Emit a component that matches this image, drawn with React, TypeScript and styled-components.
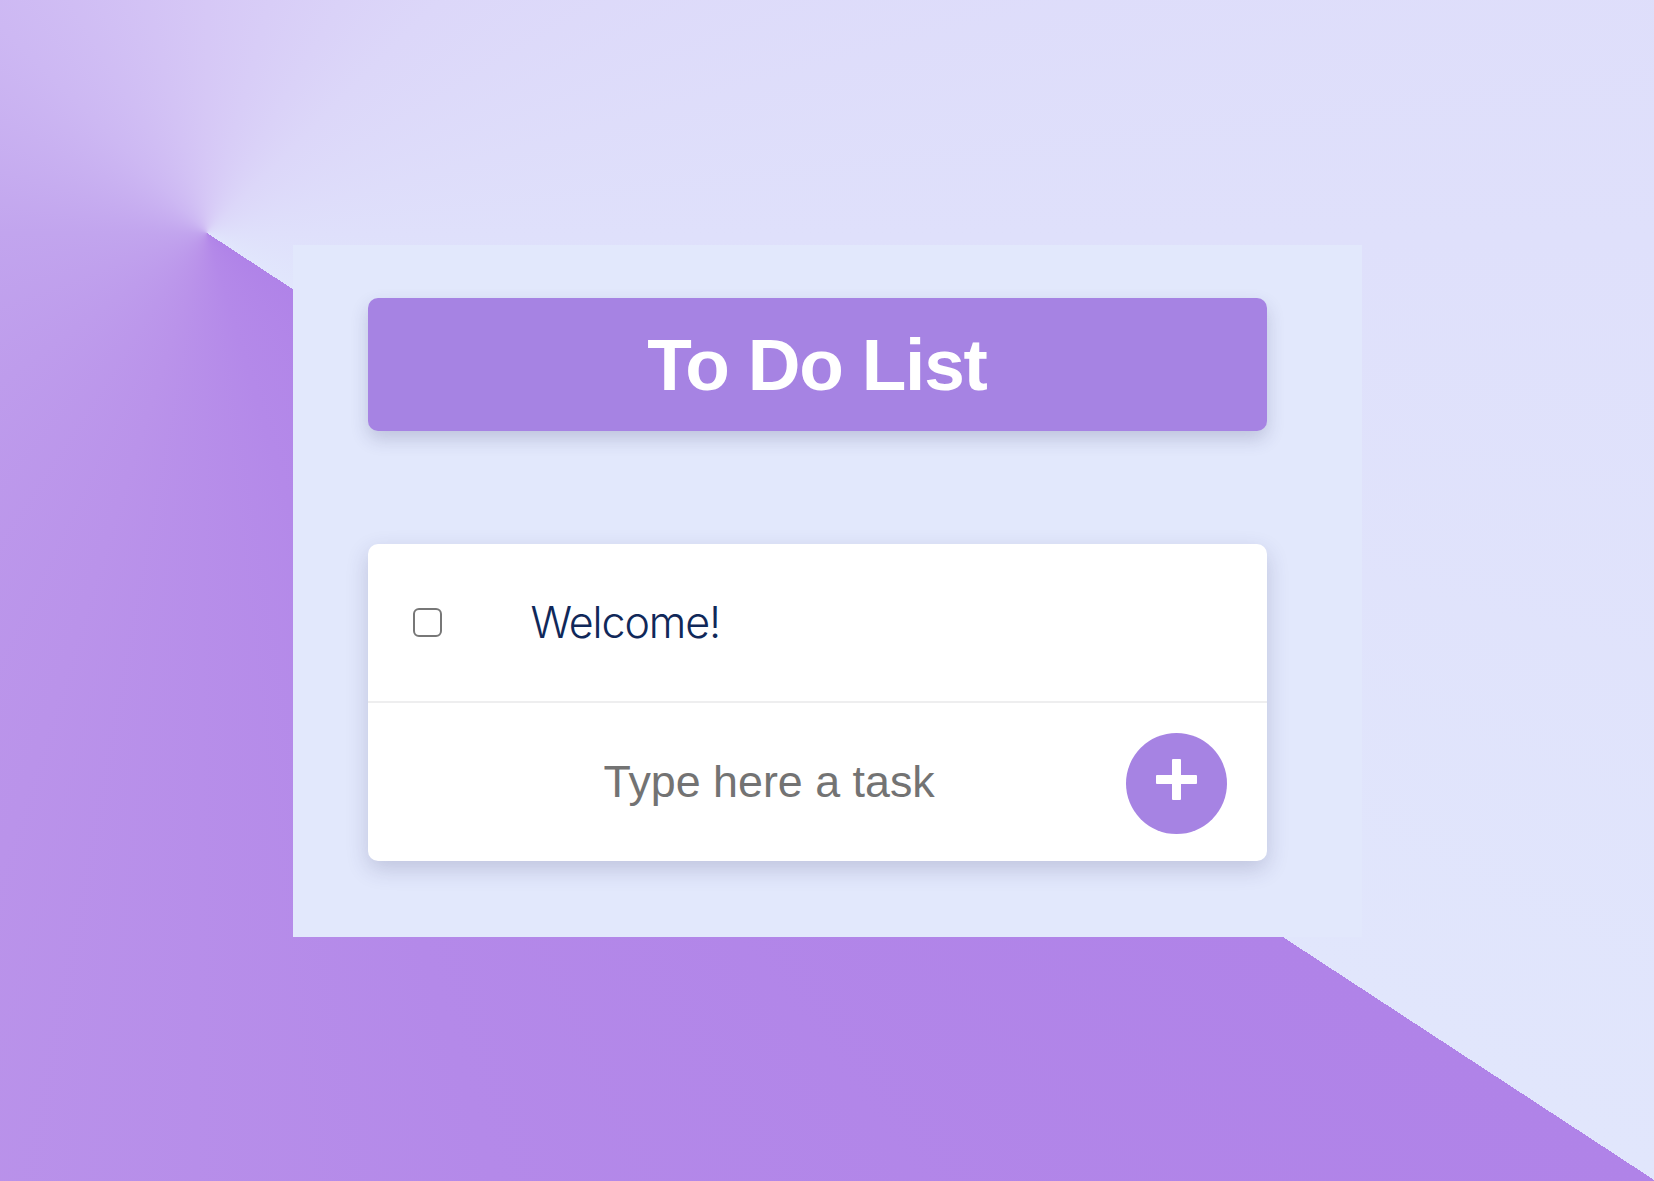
import React from "react";
import styled, { createGlobalStyle } from "styled-components";

const GlobalStyle = createGlobalStyle`
  html, body {
    margin: 0;
    padding: 0;
  }
  body {
    font-family: "Liberation Sans", Arial, sans-serif;
  }
  * { box-sizing: border-box; }
`;

const Page = styled.main`
  min-height: 100vh;
  width: 100%;
  display: flex;
  align-items: center;
  justify-content: center;
  background: conic-gradient(
    from 123.2deg at 207px 233px,
    #b083e8 0deg,
    #b489e9 40deg,
    #ba93ea 75deg,
    #c2a5ee 147deg,
    #cdb8f3 192deg,
    #d6c8f6 237deg,
    #dcd7f9 282deg,
    #dfe0fb 327deg,
    #e1e6fc 360deg
  );
`;

const Panel = styled.section`
  width: 1069px;
  height: 692px;
  background: #e2e8fc;
  display: flex;
  flex-direction: column;
  padding: 53px 95px 0 75px;
  gap: 113px;
`;

const Header = styled.header`
  height: 133px;
  background: #a683e3;
  border-radius: 10px;
  box-shadow: 0 8px 18px rgba(50, 50, 100, 0.2);
  display: flex;
  align-items: center;
  justify-content: center;
`;

const Title = styled.h1`
  margin: 0;
  color: #ffffff;
  font-family: "Liberation Sans", Arial, sans-serif;
  font-weight: 700;
  font-size: 73px;
  letter-spacing: -1.2px;
  line-height: 1;
`;

const Card = styled.div`
  background: #ffffff;
  border-radius: 10px;
  box-shadow: 0 8px 22px rgba(50, 50, 100, 0.2);
  display: flex;
  flex-direction: column;
  overflow: hidden;
`;

const TaskRow = styled.div`
  height: 159px;
  display: flex;
  align-items: center;
  padding-left: 45px;
  gap: 89px;
  border-bottom: 2px solid #eeeeef;
`;

const Checkbox = styled.span`
  width: 29px;
  height: 29px;
  border: 2.5px solid #777777;
  border-radius: 6px;
  background: #ffffff;
  flex-shrink: 0;
`;

const TaskText = styled.span`
  font-family: Inter, Roboto, "Liberation Sans", sans-serif;
  font-weight: 260;
  font-size: 43px;
  letter-spacing: -1.1px;
  color: #102859;
  line-height: 1;
`;

const InputRow = styled.form`
  height: 158px;
  display: flex;
  align-items: center;
  padding: 0 40px 0 236px;
`;

const TaskInput = styled.input`
  flex: 1;
  min-width: 0;
  border: none;
  outline: none;
  background: transparent;
  padding: 0;
  font-family: "Liberation Sans", Arial, sans-serif;
  font-size: 44.8px;
  color: #333;
  &::placeholder {
    color: #737373;
    opacity: 1;
  }
`;

const AddButton = styled.button`
  width: 101px;
  height: 101px;
  border-radius: 50%;
  border: none;
  background: #a683e3;
  display: flex;
  align-items: center;
  justify-content: center;
  padding: 0 0 8px 0;
  margin-top: 4px;
  cursor: pointer;
  flex-shrink: 0;
`;

export default function App() {
  return (
    <>
      <GlobalStyle />
      <Page>
        <Panel>
          <Header>
            <Title>To Do List</Title>
          </Header>
          <Card>
            <TaskRow>
              <Checkbox />
              <TaskText>Welcome!</TaskText>
            </TaskRow>
            <InputRow onSubmit={(e) => e.preventDefault()}>
              <TaskInput placeholder="Type here a task" />
              <AddButton type="button" aria-label="Add task">
                <svg width="41" height="41" viewBox="0 0 41 41">
                  <rect x="0" y="16" width="41" height="9" rx="1" fill="#fff" />
                  <rect x="16" y="0" width="9" height="41" rx="1" fill="#fff" />
                </svg>
              </AddButton>
            </InputRow>
          </Card>
        </Panel>
      </Page>
    </>
  );
}
